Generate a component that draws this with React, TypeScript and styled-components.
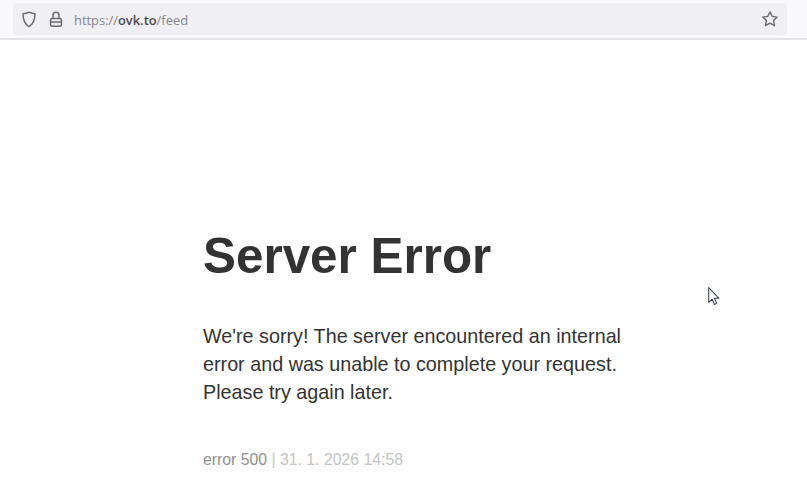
import React from "react";
import styled, { createGlobalStyle } from "styled-components";

const Global = createGlobalStyle`
  html, body { margin: 0; padding: 0; background: #fff; }
  body { width: 807px; height: 499px; overflow: hidden; font-family: "Liberation Sans", Arial, sans-serif; position: relative; }
`;

const Toolbar = styled.header`
  height: 40px;
  padding: 3px 20px 0 13px;
  box-sizing: border-box;
  background: #f9f9fb;
  border-bottom: 2px solid #e3e3e6;
`;

const UrlBar = styled.div`
  height: 32px;
  border-radius: 4px;
  background: #f0f0f4;
  display: flex;
  align-items: center;
  padding: 0 8px;
`;

const IconSlot = styled.span<{ $gap: number }>`
  display: flex;
  margin-right: ${(p) => p.$gap}px;
`;

const Url = styled.div`
  font-family: "Open Sans", "Inter", sans-serif;
  font-size: 12.9px;
  padding-top: 2px;
  color: #85858e;
  flex: 1;
  b { font-weight: 600; color: #4a4a52; }
`;

const Main = styled.main`
  padding: 186px 0 0 203px;
  width: 440px;
`;

const Title = styled.h1`
  margin: 0;
  font-size: 49.4px;
  line-height: 60px;
  font-weight: 700;
  color: #333;
`;

const Message = styled.p`
  margin: 36px 0 0;
  font-size: 19.76px;
  line-height: 28px;
  color: #333;
`;

const Meta = styled.p`
  margin: 40px 0 0;
  font-size: 15.8px;
  line-height: 28px;
  color: #c4c4c4;
  span { color: #8f8f8f; }
`;

const Cursor = styled.svg`
  position: absolute;
  left: 707px;
  top: 286px;
`;

export default function App() {
  return (
    <>
      <Global />
      <Toolbar>
        <UrlBar>
          <IconSlot $gap={11}>
            <svg width="16" height="17" viewBox="0 0 16 17" fill="none" stroke="#6a6a74" strokeWidth="1.5">
              <path d="M8 1.2c1.8 1 3.8 1.5 6 1.6 0 6-1.8 10.4-6 12.8-4.2-2.4-6-6.8-6-12.8 2.2-.1 4.2-.6 6-1.6z" strokeLinejoin="round" />
            </svg>
          </IconSlot>
          <IconSlot $gap={10}>
            <svg width="16" height="17" viewBox="0 0 16 17" fill="none" stroke="#6a6a74" strokeWidth="1.5">
              <rect x="2.6" y="7.5" width="10.8" height="7.8" rx="1.5" />
              <path d="M5 7.5V4.2a3 3 0 0 1 6 0v3.3" />
              <path d="M2.6 11h10.8" />
            </svg>
          </IconSlot>
          <Url>
            https://<b>ovk.to</b>/feed
          </Url>
          <svg width="18" height="18" viewBox="0 0 18 18" fill="none" stroke="#6a6a74" strokeWidth="1.4" strokeLinejoin="round">
            <path d="M9 1.8l2.2 4.6 5 .7-3.6 3.5.9 5-4.5-2.4-4.5 2.4.9-5L1.8 7.1l5-.7z" />
          </svg>
        </UrlBar>
      </Toolbar>
      <Main>
        <Title>Server Error</Title>
        <Message>
          We're sorry! The server encountered an internal error and was unable to complete your request. Please try again later.
        </Message>
        <Meta>
          <span>error 500</span> | 31. 1. 2026 14:58
        </Meta>
      </Main>
      <Cursor width="15" height="20" viewBox="0 0 14 19">
        <path d="M1.5 1.5v14l3.2-3 2.2 5 2.2-1-2.2-4.8h4.4z" fill="#fff" stroke="#3a3f55" strokeWidth="1" strokeLinejoin="round" />
      </Cursor>
    </>
  );
}
